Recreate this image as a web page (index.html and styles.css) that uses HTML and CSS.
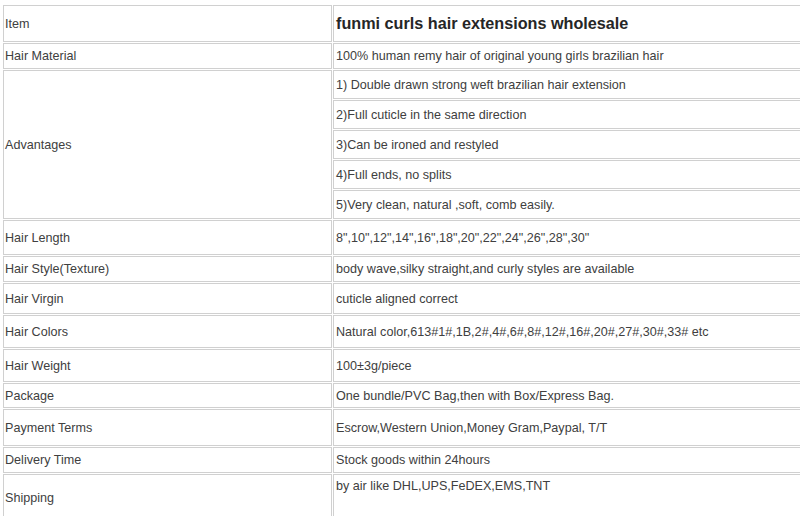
FILE: index.html
```html
<!DOCTYPE html>
<html>
<head>
<meta charset="utf-8">
<link rel="stylesheet" href="styles.css">
</head>
<body>
<table class="spec">
  <tr class="r37"><td class="k">Item</td><td class="v"><strong class="title">funmi curls hair extensions wholesale</strong></td></tr>
  <tr class="r26"><td class="k">Hair Material</td><td class="v">100% human remy hair of original young girls brazilian hair</td></tr>
  <tr class="r29"><td class="k" rowspan="5">Advantages</td><td class="v">1) Double drawn strong weft brazilian hair extension</td></tr>
  <tr class="r29"><td class="v">2)Full cuticle in the same direction</td></tr>
  <tr class="r29"><td class="v">3)Can be ironed and restyled</td></tr>
  <tr class="r29"><td class="v">4)Full ends, no splits</td></tr>
  <tr class="r29"><td class="v">5)Very clean, natural ,soft, comb easily.</td></tr>
  <tr class="r35"><td class="k">Hair Length</td><td class="v">8",10",12",14",16",18",20",22",24",26",28",30"</td></tr>
  <tr class="r26"><td class="k">Hair Style(Texture)</td><td class="v">body wave,silky straight,and curly styles are available</td></tr>
  <tr class="r31"><td class="k">Hair Virgin</td><td class="v">cuticle aligned correct</td></tr>
  <tr class="r33"><td class="k">Hair Colors</td><td class="v">Natural color,613#1#,1B,2#,4#,6#,8#,12#,16#,20#,27#,30#,33# etc</td></tr>
  <tr class="r33"><td class="k">Hair Weight</td><td class="v">100±3g/piece</td></tr>
  <tr class="r25"><td class="k">Package</td><td class="v">One bundle/PVC Bag,then with Box/Express Bag.</td></tr>
  <tr class="r37"><td class="k">Payment Terms</td><td class="v">Escrow,Western Union,Money Gram,Paypal, T/T</td></tr>
  <tr class="r26"><td class="k">Delivery Time</td><td class="v">Stock goods within 24hours</td></tr>
  <tr class="r47"><td class="k">Shipping</td><td class="v top">by air like DHL,UPS,FeDEX,EMS,TNT</td></tr>
</table>
</body>
</html>
```

FILE: styles.css
```css
html, body {
  margin: 0;
  padding: 0;
  overflow: hidden;
  background: #ffffff;
}

.spec {
  margin: 4px 0 0 2px;
  border-collapse: separate;
  border-spacing: 1px;
  table-layout: fixed;
  width: 1000px;
  font-family: "Liberation Sans", Arial, sans-serif;
  font-size: 12.6px;
  color: #404040;
}

.spec td {
  box-sizing: border-box;
  border: 1px solid #d0d0d0;
  padding: 0 1px 0 1px;
  vertical-align: middle;
  white-space: nowrap;
}

.spec td.k {
  width: 329px;
}

.spec td.v {
  padding-left: 2px;
}

.spec td.top {
  vertical-align: top;
  padding-top: 4px;
}

.title {
  font-size: 16.2px;
  font-weight: bold;
  color: #262626;
}

.r25 td { height: 25px; }
.r26 td { height: 26px; }
.r29 td { height: 29px; }
.r31 td { height: 31px; }
.r33 td { height: 33px; }
.r35 td { height: 35px; }
.r37 td { height: 37px; }
.r47 td { height: 47px; }
.spec td[rowspan] { height: auto; }
```
